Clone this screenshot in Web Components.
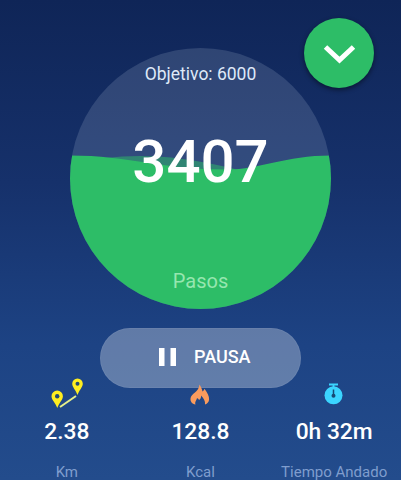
<!DOCTYPE html>
<html lang="es">
<head>
<meta charset="utf-8">
<title>Pasos</title>
<style>
html,body{margin:0;height:100%;overflow:hidden}
body{font-family:Roboto,"Noto Sans",sans-serif;color:#fff}
</style>
</head>
<body>
<step-app></step-app>
<script>
class Base extends HTMLElement {
  connectedCallback() {
    if (!this.shadowRoot) this.attachShadow({mode: 'open'}).innerHTML = this.view();
  }
}

customElements.define('step-goal', class extends Base {
  view() {
    return `<style>
:host{display:grid;flex:none;width:261px;height:261px;border-radius:50%;overflow:hidden}
svg,.text{grid-area:1/1}
svg{display:block;width:261px;height:261px}
.text{display:flex;flex-direction:column;align-items:center;text-align:center}
.goal{margin-top:16px;font-size:17.500px;line-height:20px;color:#dfe9f8}
.count{margin-top:43px;font-size:60px;line-height:70px;font-weight:500}
.unit{margin-top:72px;font-size:20px;line-height:24px;color:#96e6af}
</style>
<svg viewBox="0 0 261 261">
  <rect width="261" height="261" fill="#e4f4ff" fill-opacity=".145"/>
  <path d="M35 110C70 106 108 107 165 121V135H35Z" fill="#2dbd67" fill-opacity=".5"/>
  <path d="M0 107.500C60 107.500 90 121.500 157 121.500C190 121.500 215 107.500 261 107.500V261H0Z" fill="#2dbd67"/>
</svg>
<div class="text"><div class="goal"><slot name="goal"></slot></div><div class="count"><slot></slot></div><div class="unit"><slot name="unit"></slot></div></div>`;
  }
});

customElements.define('round-button', class extends Base {
  view() {
    return `<style>
:host{display:block;width:70px;height:70px}
button{display:grid;place-items:center;width:70px;height:70px;padding:0;border:0;border-radius:50%;background:#2dbd67;box-shadow:0 2px 5px #0007}
svg{display:block}
</style><button aria-label="Abrir"><svg width="34" height="24" viewBox="0 0 34 24"><path d="M3.500 6L17.500 19L31.500 6" fill="none" stroke="#fff" stroke-width="5"/></svg></button>`;
  }
});

customElements.define('pause-button', class extends Base {
  view() {
    return `<style>
:host{display:block;flex:none}
button{box-sizing:border-box;display:flex;align-items:center;width:201px;height:60px;padding:0 0 2px 59px;gap:18px;border:0;border-radius:30px;background:#ffffff4d;box-shadow:inset 0 0 0 1px #ffffff0d;font:500 18px/24px Roboto,sans-serif;color:#fff}
svg{display:block}
</style><button><svg width="17" height="18" viewBox="0 0 17 18"><path d="M0 0h5.500v18H0zM11.500 0H17v18h-5.500z" fill="#fff"/></svg><span><slot></slot></span></button>`;
  }
});

const icons = {
  route: `<svg width="34" height="34" viewBox="50 377 34 34"><path d="M60 407L76 396" stroke="#e6f08a" stroke-width="2"/><path d="M57.300 408C55.500 403 51.500 400 51.500 396.300A5.700 5.700 0 0 1 62.900 396.300C62.900 400 59 403 57.300 408ZM77.500 395C76 390.500 72.200 387 72.200 383.700A5.300 5.300 0 0 1 82.800 383.700C82.800 387 79 390.500 77.500 395Z" fill="#ffee20"/><circle cx="57.200" cy="396.300" r="2.200" fill="#234a72"/><circle cx="77.500" cy="383.700" r="2" fill="#234a72"/></svg>`,
  flame: `<svg width="34" height="34" viewBox="183.500 377 34 34"><path d="M200 384.500C201.500 387 202.500 389 203 391.500C204 391 204.700 390 205 388.800C208 393 209.800 396.500 209.600 399.500C209.400 402 208 403.500 205.500 404.500C206 401 204 398 201.500 395.500C201.800 398 201 399 199.500 400C199 399 198.500 398.500 197.500 398C197 400.500 195 402 196 404.500C192.500 404 190.700 401.500 191 398.500C191.500 393.500 199.500 392 200 384.500Z" fill="#fa9b5d"/></svg>`,
  timer: `<svg width="34" height="34" viewBox="317 377 34 34"><path d="M329 384.500h9M333.500 384v4" stroke="#3bd5ff" stroke-width="1.800"/><circle cx="333.500" cy="395.300" r="9" fill="#3bd5ff"/><path d="M333.500 389.500v6" stroke="#174a75" stroke-width="1.500"/><circle cx="333.500" cy="395.800" r="2" fill="#174a75"/></svg>`
};

customElements.define('step-stat', class extends Base {
  view() {
    return `<style>
:host{display:flex;flex-direction:column;align-items:center;white-space:nowrap}
svg{display:block}
.value{margin-top:7px;font-size:22.800px;line-height:28px;font-weight:500}
.label{margin-top:16px;font-size:15px;line-height:20px;color:#7f9dce}
</style>${icons[this.getAttribute('icon')]}<div class="value"><slot></slot></div><div class="label"><slot name="label"></slot></div>`;
  }
});

customElements.define('step-app', class extends Base {
  view() {
    return `<style>
:host{display:flex;flex-direction:column;align-items:center;box-sizing:border-box;height:480px;width:401px;padding-top:48px;background:linear-gradient(#0f2557,#16316b 38%,#1d4384 72%,#234c8c);position:relative;overflow:hidden}
round-button{position:absolute;left:304px;top:17.500px}
pause-button{margin-top:19px}
.stats{display:grid;flex:none;grid-template-columns:repeat(3,1fr);width:401px;margin-top:-11px;position:relative}
</style>
<step-goal><span slot="goal">Objetivo: 6000</span>3407<span slot="unit">Pasos</span></step-goal>
<round-button></round-button>
<pause-button>PAUSA</pause-button>
<div class="stats">
  <step-stat icon="route">2.38<span slot="label">Km</span></step-stat>
  <step-stat icon="flame">128.8<span slot="label">Kcal</span></step-stat>
  <step-stat icon="timer">0h 32m<span slot="label">Tiempo Andado</span></step-stat>
</div>`;
  }
});
</script>
</body>
</html>
